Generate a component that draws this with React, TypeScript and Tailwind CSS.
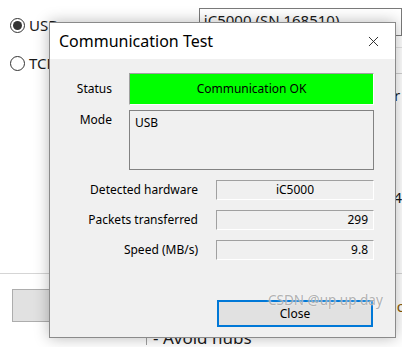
import { X } from "lucide-react";

const font = { fontFamily: '"Noto Sans", "Open Sans", sans-serif' };

function Radio({ checked, label }: { checked?: boolean; label: string }) {
  return (
    <div className="flex items-center gap-[4px] h-[16px]">
      <span className="w-[15px] h-[15px] rounded-full border border-[#333] bg-white flex items-center justify-center">
        {checked && <span className="w-[9px] h-[9px] rounded-full bg-[#333]" />}
      </span>
      <span className="text-[15px] text-[#1a1a1a]">{label}</span>
    </div>
  );
}

function ValueBox({ value, align }: { value: string; align: "center" | "right" }) {
  return (
    <div
      className={`h-[20px] border-t border-l border-[#a0a0a0] border-b border-r border-b-white border-r-white bg-[#f0f0f0] flex items-center px-[5px] text-[12px] text-black ${
        align === "center" ? "justify-center" : "justify-end"
      }`}
    >
      {value}
    </div>
  );
}

export default function App() {
  return (
    <div className="relative w-[402px] h-[347px] overflow-hidden bg-white" style={font}>
      {/* main window behind the dialog */}
      <div className="flex pt-[8px] h-[273px]">
        <div className="flex flex-col gap-[22px] pl-[10px] pt-[9px] w-[137px]">
          <Radio checked label="USB" />
          <Radio label="TCP" />
        </div>
        <div className="pt-[12px] w-[64px] text-[15px] text-[#1a1a1a] leading-[16px]">Device</div>
        <div className="flex-1 flex flex-col">
          <div className="h-[28px] border border-[#7a7a7a] px-[4px] text-[15px] leading-[22px] text-[#1a1a1a]">
            iC5000 (SN 168510)
          </div>
          <div className="h-[12px] border-b border-[#e3e3e3]" />
          <div className="h-[26px] border-b border-[#d0d0d0]" />
          <div className="pl-[186px] pt-[10px] text-[15px] text-[#1a1a1a]">or</div>
          <div className="pl-[186px] pt-[82px] text-[15px] leading-[16px] text-[#1a1a1a]">34</div>
          <div className="pl-[186px] text-[15px] leading-[16px] text-[#1a1a1a]">D</div>
        </div>
      </div>
      <div className="border-t border-[#d5d5d5] pt-[15px] pl-[12px] flex">
        <div className="w-[120px] h-[33px] bg-[#e1e1e1] border border-[#adadad]" />
        <div className="ml-auto mr-[-10px] pt-[6px] text-[15px] text-[#8a5a00]">or</div>
      </div>
      <div className="ml-[146px] mt-[9px] border-l border-[#a0a0a0] pl-[6px] text-[17px] leading-[14px] text-[#1a1a1a]">
        - Avoid hubs
      </div>

      {/* dialog */}
      <div className="absolute left-[49px] top-[22px] w-[347px] h-[316px] border border-[#8a8a8a] bg-[#f0f0f0] flex flex-col shadow-[0_0_14px_rgba(0,0,0,0.28)]">
        <div className="h-[36px] bg-white flex items-center pl-[9px] pr-[13px]">
          <span className="text-[16px] text-black">Communication Test</span>
          <X className="ml-auto w-[17px] h-[17px] text-[#222]" strokeWidth={1.3} />
        </div>
        <div className="flex-1 flex flex-col pt-[14px]">
          <div className="grid grid-cols-[62px_245px] gap-x-[17px] gap-y-[5px]">
            <div className="text-right text-[12px] h-[32px] flex items-center justify-end">Status</div>
            <div className="h-[32px] bg-[#00ff00] border border-[#a0a0a0] border-b-white border-r-white flex items-center justify-center text-[12px] text-black">
              Communication OK
            </div>
            <div className="text-right text-[12px] pt-[1px]">Mode</div>
            <div className="h-[60px] border border-[#828282] bg-[#f0f0f0] px-[5px] pt-[3px] text-[12px] text-black">
              USB
            </div>
          </div>
          <div className="grid grid-cols-[148px_158px] gap-x-[18px] gap-y-[10px] mt-[10px]">
            <div className="text-right text-[12px] h-[20px] flex items-center justify-end">Detected hardware</div>
            <ValueBox value="iC5000" align="center" />
            <div className="text-right text-[12px] h-[20px] flex items-center justify-end">Packets transferred</div>
            <ValueBox value="299" align="right" />
            <div className="text-right text-[12px] h-[20px] flex items-center justify-end">Speed (MB/s)</div>
            <ValueBox value="9.8" align="right" />
          </div>
          <div className="mt-auto mb-[10px] ml-[167px] w-[156px] h-[27px] border-2 border-[#0078d7] bg-[#e1e1e1] flex items-center justify-center text-[12px] text-black">
            Close
          </div>
        </div>
      </div>

      {/* watermark */}
      <div className="absolute left-[268px] top-[290px] text-[13.5px] text-[#a8a8a8]/90 [text-shadow:0_0_2px_rgba(255,255,255,0.9)]">
        CSDN @up up day
      </div>
    </div>
  );
}
